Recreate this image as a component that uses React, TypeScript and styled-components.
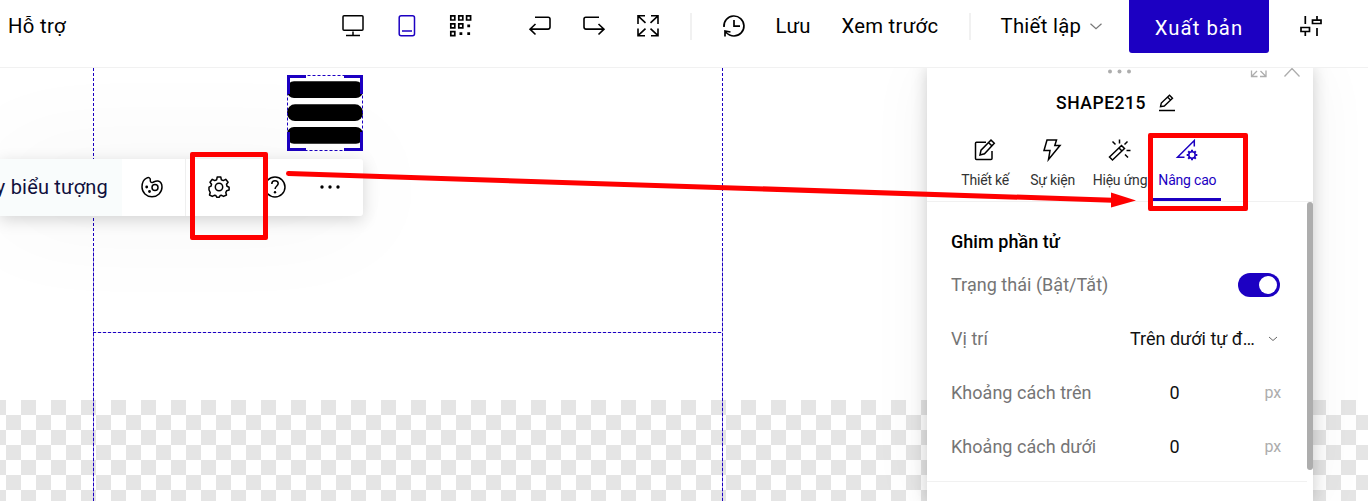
import React from 'react';
import styled, { createGlobalStyle } from 'styled-components';

const ACCENT = '#1c00c2';
const RED = '#ff0000';

const GlobalStyle = createGlobalStyle`
  * { box-sizing: border-box; }
  html, body { margin: 0; padding: 0; overflow: hidden; }
  body { font-family: Roboto, "Liberation Sans", sans-serif; color: #000; background: #fff; }
`;

const Page = styled.div`
  position: relative;
  width: 1368px;
  height: 501px;
  overflow: hidden;
  display: flex;
  flex-direction: column;
  background: #fff;
`;

const Header = styled.header`
  flex: none;
  height: 68px;
  display: flex;
  align-items: flex-start;
  background: #fff;
  border-bottom: 1px solid #f1f1f1;
  position: relative;
  z-index: 2;
`;

const HeaderText = styled.span<{ $ml: number; $w: number }>`
  flex: none;
  margin-left: ${p => p.$ml}px;
  width: ${p => p.$w}px;
  height: 52px;
  line-height: 52px;
  font-size: 20.3px;
  letter-spacing: 0.3px;
  white-space: nowrap;
`;

const HeaderIcon = styled.span<{ $ml: number; $color?: string }>`
  flex: none;
  margin-left: ${p => p.$ml}px;
  width: 24px;
  height: 52px;
  display: flex;
  align-items: center;
  color: ${p => p.$color ?? '#000'};
`;

const Divider = styled.span<{ $ml: number }>`
  flex: none;
  margin: 13px 0 0 ${p => p.$ml}px;
  width: 2px;
  height: 27px;
  background: #f1f1f1;
`;

const PublishButton = styled.button`
  flex: none;
  margin: 0 0 0 16px;
  padding: 2px 0 0;
  width: 140px;
  height: 53px;
  border: 0;
  border-radius: 0 0 3px 3px;
  background: ${ACCENT};
  color: #fff;
  font: 400 20.3px Roboto, sans-serif;
  letter-spacing: 1.05px;
`;

const Workspace = styled.main`
  flex: 1;
  position: relative;
  background: linear-gradient(#fff 332px, transparent 332px),
    repeating-conic-gradient(#e5e5e5 0 25%, #fff 0 50%) 6px 332px / 30px 30px;
`;

const Artboard = styled.div`
  margin-left: 93px;
  width: 630px;
  height: 433px;
  display: flex;
  flex-direction: column;
  background:
    repeating-linear-gradient(${ACCENT} 0 3px, transparent 3px 5px) left top / 1px 100% no-repeat,
    repeating-linear-gradient(${ACCENT} 0 3px, transparent 3px 5px) right top / 1px 100% no-repeat,
    linear-gradient(transparent 180px, #a396e2 180px) left top / 1px 100% no-repeat,
    linear-gradient(transparent 180px, #a396e2 180px) right top / 1px 100% no-repeat;
`;

const Section = styled.div`
  height: 265px;
  background: repeating-linear-gradient(90deg, ${ACCENT} 0 3px, #d8d3f5 3px 5px) left bottom / 100% 1px no-repeat;
`;

const Shape = styled.div`
  position: absolute;
  left: 287px;
  top: 7px;
  width: 76px;
  height: 76px;
`;

const Toolbar = styled.div`
  position: absolute;
  left: 0;
  top: 91px;
  width: 363px;
  height: 57px;
  display: flex;
  align-items: center;
  background: #fff;
  border-radius: 0 3px 3px 0;
  box-shadow: 0 4px 16px rgba(0, 0, 0, 0.16), 0 0 110px rgba(0, 0, 0, 0.05);
`;

const ToolLabel = styled.div`
  width: 122px;
  height: 57px;
  padding: 0 14px 2px 0;
  display: flex;
  align-items: center;
  justify-content: flex-end;
  background: #f9fcfc;
  color: #10103c;
  font-size: 20px;
  letter-spacing: 0.2px;
  white-space: nowrap;
`;

const ToolButton = styled.div<{ $w: number; $line?: boolean }>`
  width: ${p => p.$w}px;
  height: 57px;
  padding-bottom: 2px;
  padding-right: ${p => (p.$line ? '3px' : '0')};
  display: flex;
  align-items: center;
  justify-content: center;
  border-right: ${p => (p.$line ? '1px solid #efefef' : '0')};
`;

const Panel = styled.aside`
  position: absolute;
  left: 927px;
  top: 0;
  width: 386px;
  height: 433px;
  background: #fff;
  box-shadow: 0 0 15px rgba(0, 0, 0, 0.18), 0 0 60px rgba(0, 0, 0, 0.05);
  display: flex;
  flex-direction: column;
`;

const PanelGrip = styled.div`
  height: 16px;
  display: flex;
  justify-content: flex-end;
`;

const PanelTitle = styled.div`
  height: 38px;
  display: flex;
  align-items: center;
  padding-left: 129px;
  gap: 12px;
  font-size: 17.5px;
  font-weight: 500;
  letter-spacing: 0.55px;
`;

const Tabs = styled.div`
  height: 80px;
  padding-left: 24px;
  display: flex;
  border-bottom: 1px solid #f1f1f1;
`;

const Tab = styled.div<{ $active?: boolean }>`
  width: 67.4px;
  height: 79px;
  padding: 16px 0 0;
  display: flex;
  flex-direction: column;
  align-items: center;
  gap: 8px;
  white-space: nowrap;
  font-size: 14px;
  letter-spacing: -0.2px;
  line-height: 20px;
  color: ${p => (p.$active ? ACCENT : '#333')};
  border-bottom: ${p => (p.$active ? `3px solid ${ACCENT}` : '0')};
  svg { color: ${p => (p.$active ? ACCENT : '#000')}; }
  span { padding-left: 1px; }
`;

const PanelBody = styled.div`
  height: 280px;
  width: 380px;
  padding: 12px 0 0 24px;
  border-bottom: 1px solid #f1f1f1;
`;

const SectionTitle = styled.div`
  height: 43px;
  display: flex;
  align-items: center;
  padding-top: 11px;
  font-size: 18px;
  font-weight: 500;
  letter-spacing: 0.05px;
`;

const Row = styled.div`
  width: 329px;
  height: 54px;
  display: flex;
  align-items: center;
  font-size: 18px;
`;

const RowLabel = styled.span`
  color: #757575;
  width: 179px;
  letter-spacing: 0.03px;
  white-space: nowrap;
`;

const Value = styled.span<{ $pl: number; $w: number }>`
  padding-left: ${p => p.$pl}px;
  width: ${p => p.$w}px;
  color: #111;
  white-space: nowrap;
`;

const Unit = styled.span`
  margin: 1px -1px 0 auto;
  color: #adadad;
  font-size: 16px;
  letter-spacing: -0.2px;
`;

const Switch = styled.span`
  margin: 2px 0 0 auto;
  width: 42px;
  height: 24px;
  padding: 3px;
  display: flex;
  justify-content: flex-end;
  border-radius: 12px;
  background: ${ACCENT};
  &::after { content: ''; width: 18px; height: 18px; border-radius: 50%; background: #fff; }
`;

const Scrollbar = styled.div`
  position: absolute;
  right: 0;
  top: 134px;
  width: 6px;
  height: 268px;
  border-radius: 3px;
  background: #adadad;
`;

const Callout = styled.div<{ $x: number; $y: number; $w: number; $h: number }>`
  position: absolute;
  z-index: 3;
  left: ${p => p.$x}px;
  top: ${p => p.$y}px;
  width: ${p => p.$w}px;
  height: ${p => p.$h}px;
  border: 5px solid ${RED};
  border-radius: 2px;
`;

const Arrow = styled.svg`
  position: absolute;
  z-index: 3;
  left: 280px;
  top: 165px;
`;

type IconProps = { size?: number; sw?: number; color?: string; children: React.ReactNode };
const Icon = ({ size = 24, sw = 1.5, color = 'currentColor', children }: IconProps) => (
  <svg width={size} height={size} viewBox={`0 0 ${size} ${size}`} fill="none" stroke={color} strokeWidth={sw}>
    {children}
  </svg>
);

const App = () => (
  <Page>
    <GlobalStyle />
    <Header>
      <HeaderText $ml={8} $w={60}>Hỗ trợ</HeaderText>
      <HeaderIcon $ml={273}><Icon><rect x="2" y="1.7" width="20" height="14.5" rx="1" /><path d="M12 17.5v4M5 21.5h14" /></Icon></HeaderIcon>
      <HeaderIcon $ml={30} $color={ACCENT}><Icon><rect x="4.2" y="1.7" width="15.3" height="20" rx="2" /><path d="M7 17h10" /></Icon></HeaderIcon>
      <HeaderIcon $ml={30}>
        <Icon sw={1.7}>
          <path d="M1.8 1.8h4v4.2h-4zM9.8 1.8h4v4.2h-4zM17.6 1.8h4v4.2h-4zM1.8 9.8h4v4h-4zM9.8 9.8h4v4h-4zM1.8 17.6h4v4h-4z" />
          <path d="M18.3 11.8h2.800M10.500 19.6h2.800M18.3 19.6h2.800" strokeWidth="2.8" />
        </Icon>
      </HeaderIcon>
      <HeaderIcon $ml={55}><Icon sw={1.6}><path d="M7 3.3h13.2q1.8 0 1.8 1.8v8q0 2-2 2H2M7.5 10 2 15.2l5.5 5.3" /></Icon></HeaderIcon>
      <HeaderIcon $ml={30}><Icon sw={1.6}><path d="M17 3.3H3.8Q2 3.3 2 5.1v8q0 2 2 2h18M16.5 10l5.5 5.2-5.5 5.3" /></Icon></HeaderIcon>
      <HeaderIcon $ml={30}>
        <Icon sw={1.6}><path d="M2 10V1.8h7M2 1.8l7.5 7M15 1.8h7V10M22 1.8l-7.5 7M2 14.5v7.2h7M2 21.7l7.5-7M15 21.7h7v-7.2M22 21.7l-7.5-7" /></Icon>
      </HeaderIcon>
      <Divider $ml={30} />
      <HeaderIcon $ml={30}>
        <Icon sw={1.7}><path d="M2 13A10 10 0 1 1 12 22C9 22 6 20.5 3.500 18M3 22.500v-5.500l5.500 1M12 6v6.200h6" /></Icon>
      </HeaderIcon>
      <HeaderText $ml={29.6} $w={65.8}>Lưu</HeaderText>
      <HeaderText $ml={0} $w={127.6}>Xem trước</HeaderText>
      <Divider $ml={0} />
      <HeaderText $ml={29.5} $w={88.5}>Thiết lập</HeaderText>
      <HeaderIcon $ml={0} $color="#777"><Icon sw={1.2}><path d="m1.5 9.7 5.5 5 5.5-5" /></Icon></HeaderIcon>
      <PublishButton>Xuất bản</PublishButton>
      <HeaderIcon $ml={30}>
        <Icon sw={1.7}><path d="M6.3 2v8M6.3 18v4M2 13.5h8.500v4H2zM18 2v4M18 14v8M13.5 6.2h8.500v3.300h-8.500z" /></Icon>
      </HeaderIcon>
    </Header>
    <Workspace>
      <Artboard><Section /></Artboard>
      <Shape>
        <svg width="76" height="76">
          <rect x="0" y="6.3" width="76" height="16.7" rx="7" /><rect x="0" y="29.3" width="76" height="16.7" rx="8" /><rect x="0" y="52" width="76" height="16.7" rx="7" />
          <rect x=".5" y=".5" width="75" height="75" fill="none" stroke={ACCENT} strokeDasharray="3 2" />
          <path d="M19 1.5H1.5V19M57 1.5h17.5V19M19 74.5H1.5V57M57 74.5h17.5V57" fill="none" stroke={ACCENT} strokeWidth="3" />
        </svg>
      </Shape>
      <Toolbar>
        <ToolLabel>y biểu tượng</ToolLabel>
        <ToolButton $w={64} $line>
          <Icon>
            <path d="M6.5 3.2C4 4.5 2 7.5 2 12a10 9.8 0 0 0 20 0c0-3.5-1.5-5.5-4-6-2-.4-3.5.5-5 1.2-2 .8-3-.5-2.7-2.200.3-2-1.5-3.1-3.8-1.800z" />
            <circle cx="15" cy="12.5" r="3" />
            <g fill="currentColor" stroke="none"><circle cx="6.7" cy="12" r="1.4" /><circle cx="9.5" cy="16.5" r="1.4" /></g>
          </Icon>
        </ToolButton>
        <ToolButton $w={66}>
          <Icon>
            <path d="M10.2 2h3.600l.5 2.700 2 .9 2.400-1.300 2.400 3-1.600 2 .5 1.900 2.100 1v2.800l-2.500.7-.8 1.900.7 2.400-3 1.400-1.900-1.100-1.500.3-1 1.700h-2.200l-1-1.700-1.600-.3-2 1.100-2.800-1.400.7-2.500-.8-1.800L2 15v-2.800l2-1 .5-1.900-1.500-2 2.300-3 2.500 1.300 1.900-.9z" strokeLinejoin="round" /><circle cx="12" cy="12" r="3.7" />
          </Icon>
        </ToolButton>
        <ToolButton $w={46}>
          <Icon><circle cx="12" cy="12" r="10" /><path d="M8.8 9c0-2 1.4-3.2 3.2-3.200s3.2 1.100 3.200 2.800c0 2.300-3.100 2.500-3.100 5.500" /><circle cx="12" cy="17.3" r="1.2" fill="currentColor" stroke="none" /></Icon>
        </ToolButton>
        <ToolButton $w={64}>
          <Icon><g fill="currentColor" stroke="none"><circle cx="4" cy="12" r="1.7" /><circle cx="12" cy="12" r="1.7" /><circle cx="20" cy="12" r="1.7" /></g></Icon>
        </ToolButton>
      </Toolbar>
      <Panel>
        <PanelGrip>
          <svg width="206" height="16" fill="none" stroke="#adadad" strokeWidth="1.3">
            <g fill="#adadad" stroke="none"><circle cx="3" cy="3.5" r="2" /><circle cx="12.5" cy="3.5" r="2" /><circle cx="22" cy="3.5" r="2" /></g>
            <path d="M144.5 2.5v6h6M144.5 8.5l5.5-5.5M153 8.5h6V2.5M159 8.5 153.5 3M177.5 8.5l7.5-8 7.5 8" />
          </svg>
        </PanelGrip>
        <PanelTitle>
          SHAPE215
          <Icon size={18} sw={1.4}><path d="M2.5 12.7 3.3 9 11.5 1.2l3 3L6.3 12zM9.5 3l3 3M1 16.5h16" /></Icon>
        </PanelTitle>
        <Tabs>
          <Tab>
            <Icon><path d="M13 4.2H3.5q-1 0-1 1V20.5q0 1 1 1H18q1 0 1-1V13M7 17l1-4.8L18 2l3.3 3.3L11.5 15.8zM15.5 4.5l3.5 3.5" /></Icon>
            <span>Thiết kế</span>
          </Tab>
          <Tab>
            <Icon><path d="M7 2h9.5l-1.7 5.5H20L8.5 21.5l1.5-9H4z" /></Icon>
            <span>Sự kiện</span>
          </Tab>
          <Tab>
            <Icon><path d="m2.5 19 12-11.5 3 3-12 11.5zM12 10l3 3M12.500 1.5v4M5.500 3.5l3 3M20.500 3.5l-3 3M19.500 12.500h4M18 16.500l3 3" /></Icon>
            <span>Hiệu ứng</span>
          </Tab>
          <Tab $active>
            <Icon><path d="M9.5 19.3H2.5L19.3 2.5v6" /><circle cx="17" cy="17" r="3.2" /><path strokeWidth="2" d="M17 11.7v2M17 20.3v2M11.7 17h2M20.3 17h2M13.2 13.2l1.4 1.4M19.4 19.4l1.4 1.4M20.8 13.2l-1.4 1.4M14.6 19.4l-1.4 1.4" /></Icon>
            <span>Nâng cao</span>
          </Tab>
        </Tabs>
        <PanelBody>
          <SectionTitle>Ghim phần tử</SectionTitle>
          <Row><RowLabel>Trạng thái (Bật/Tắt)</RowLabel><Switch /></Row>
          <Row>
            <RowLabel>Vị trí</RowLabel>
            <Value $pl={0} $w={137}>Trên dưới tự đ…</Value>
            <Icon size={12} sw={1} color="#666"><path d="m2 5 4 3.5L10 5" /></Icon>
          </Row>
          <Row><RowLabel>Khoảng cách trên</RowLabel><Value $pl={39.5} $w={80}>0</Value><Unit>px</Unit></Row>
          <Row><RowLabel>Khoảng cách dưới</RowLabel><Value $pl={39.5} $w={80}>0</Value><Unit>px</Unit></Row>
        </PanelBody>
        <Scrollbar />
      </Panel>
    </Workspace>
    <Callout $x={190} $y={152} $w={78} $h={88} />
    <Callout $x={1148} $y={133} $w={100} $h={78} />
    <Arrow width="860" height="50">
      <path d="M8.5 8.5 840 35.5" stroke={RED} strokeWidth="5" strokeLinecap="round" />
      <path d="M831 27.5 856 35.5 831 42.5z" fill={RED} />
    </Arrow>
  </Page>
);

export default App;
